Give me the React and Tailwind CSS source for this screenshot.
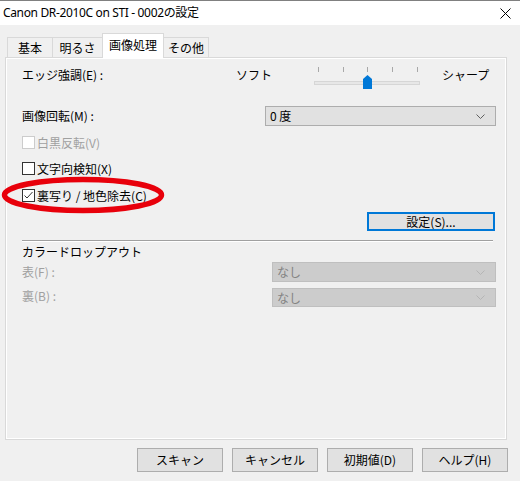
import React from "react";

function Chevron({ color = "#606060" }) {
  return (
    <svg width="9" height="5" viewBox="0 0 9 5" className="block">
      <polyline points="0.5,0.5 4.5,4.5 8.5,0.5" fill="none" stroke={color} strokeWidth="1" />
    </svg>
  );
}

function Checkbox({ checked = false, disabled = false }) {
  return (
    <div
      className={`w-[13px] h-[13px] border bg-white flex items-center justify-center ${
        disabled ? "border-[#cccccc]" : "border-[#333333]"
      }`}
    >
      {checked && (
        <svg width="11" height="11" viewBox="0 0 11 11" className="block">
          <polyline points="1.5,5.5 4,8 9.5,2" fill="none" stroke="#333" strokeWidth="1" />
        </svg>
      )}
    </div>
  );
}

function Select({ text, disabled = false, width }) {
  return (
    <div
      className={`h-full flex items-center justify-between pl-[4px] pr-[10px] border ${
        disabled ? "bg-[#cccccc] border-[#bfbfbf] text-[#838383]" : "bg-[#e1e1e1] border-[#adadad] text-black"
      }`}
      style={{ width }}
    >
      <span className="leading-none">{text}</span>
      <Chevron color={disabled ? "#b5b5b5" : "#606060"} />
    </div>
  );
}

function Slider() {
  const ticks = [6.5, 31.5, 55.5, 80.5, 105.5];
  return (
    <svg width="110" height="28" viewBox="0 0 110 28" className="block">
      {ticks.map((x) => (
        <line key={x} x1={x} y1="4" x2={x} y2="9" stroke="#a8a8a8" strokeWidth="1" />
      ))}
      <rect x="2.5" y="18.5" width="105" height="3" fill="#e7e7e7" stroke="#d6d6d6" strokeWidth="1" />
      <polygon points="51,16 55.5,12 60,16 60,26 51,26" fill="#0078d7" />
    </svg>
  );
}

function Button({ children, className = "" }) {
  return (
    <div
      className={`flex items-center justify-center bg-[#e1e1e1] border border-[#adadad] text-black ${className}`}
    >
      {children}
    </div>
  );
}

export default function App() {
  const tabs = [
    { label: "基本", w: 45 },
    { label: "明るさ", w: 50 },
    { label: "画像処理", w: 61, active: true },
    { label: "その他", w: 45 },
  ];
  return (
    <div className="relative w-[520px] h-[481px] overflow-hidden bg-[#f0f0f0] text-[12px] text-black font-['Noto_Sans_CJK_JP','Noto_Sans',sans-serif]">
      {/* Title bar */}
      <div className="h-[25px] bg-white border-t border-[#808080] flex items-center justify-between pl-[3px] pr-[9px]">
        <span className="text-[12px] tracking-[-0.35px] font-['Noto_Sans','Noto_Sans_CJK_JP',sans-serif] leading-none">
          Canon DR-2010C on STI - 0002の設定
        </span>
        <svg width="11" height="11" viewBox="0 0 11 11" className="block">
          <line x1="0.5" y1="0.5" x2="10.5" y2="10.5" stroke="#000" strokeWidth="1" />
          <line x1="10.5" y1="0.5" x2="0.5" y2="10.5" stroke="#000" strokeWidth="1" />
        </svg>
      </div>

      {/* Tabs */}
      <div className="ml-[7px] mt-[8px] h-[24px] flex items-end relative z-10">
        {tabs.map((t) =>
          t.active ? (
            <div
              key={t.label}
              className="h-[25px] -mb-px bg-white border border-b-0 border-[#d9d9d9] flex items-center justify-center -ml-px"
              style={{ width: t.w + 1 }}
            >
              <span className="leading-none -mt-[2px]">{t.label}</span>
            </div>
          ) : (
            <div
              key={t.label}
              className="h-[20px] bg-[#f0f0f0] border border-b-0 border-[#d9d9d9] flex items-center justify-center -ml-px first:ml-0"
              style={{ width: t.w + 1 }}
            >
              <span className="leading-none">{t.label}</span>
            </div>
          )
        )}
      </div>

      {/* Tab panel */}
      <div className="ml-[5px] w-[502px] h-[383px] border border-[#d9d9d9] shadow-[inset_1px_1px_0_#ffffff,inset_-1px_-1px_0_#ffffff] pl-[16px] pr-[10px] flex flex-col">
        {/* エッジ強調 */}
        <div className="mt-[5px] h-[28px] flex items-start">
          <div className="w-[214px] h-[24px] leading-[24px]">エッジ強調(E) :</div>
          <div className="w-[76px] h-[24px] leading-[24px]">ソフト</div>
          <Slider />
          <div className="ml-[20px] h-[24px] leading-[24px]">シャープ</div>
        </div>

        {/* 画像回転 */}
        <div className="mt-[15px] h-[20px] flex items-center justify-between">
          <span className="leading-none">画像回転(M) :</span>
          <Select text="0 度" width={231} />
        </div>

        {/* checkboxes */}
        <div className="mt-[10px] h-[13px] flex items-center gap-[2px] text-[#a0a0a0]">
          <Checkbox disabled />
          <span className="leading-none">白黒反転(V)</span>
        </div>
        <div className="mt-[13px] h-[13px] flex items-center gap-[2px]">
          <Checkbox />
          <span className="leading-none">文字向検知(X)</span>
        </div>
        <div className="mt-[14px] h-[13px] flex items-center gap-[2px]">
          <Checkbox checked />
          <span className="leading-none">裏写り / 地色除去(C)</span>
        </div>

        {/* 設定 button */}
        <div className="mt-[10px] h-[19px] flex justify-end pr-[1px]">
          <div className="w-[128px] h-full flex items-center justify-center bg-[#e1e1e1] border-2 border-[#0078d7]">
            <span className="leading-none">設定(S)...</span>
          </div>
        </div>

        {/* separator */}
        <div className="mt-[9px] mr-[3px] border-t border-[#a0a0a0] border-b border-b-white" />

        {/* カラードロップアウト */}
        <div className="mt-[2px] h-[16px] flex items-center">
          <span className="leading-none">カラードロップアウト</span>
        </div>
        <div className="mt-[2px] h-[20px] flex items-center justify-between text-[#a0a0a0]">
          <span className="leading-none">表(F) :</span>
          <Select text="なし" width={224} disabled />
        </div>
        <div className="mt-[6px] h-[19px] flex items-center justify-between text-[#a0a0a0]">
          <span className="leading-none -mt-[3px]">裏(B) :</span>
          <Select text="なし" width={224} disabled />
        </div>
      </div>

      {/* Bottom buttons */}
      <div className="mt-[8px] h-[24px] flex justify-end gap-[9px] pr-[12px]">
        <Button className="w-[86px]">スキャン</Button>
        <Button className="w-[86px]">キャンセル</Button>
        <Button className="w-[86px]">初期値(D)</Button>
        <Button className="w-[86px]">ヘルプ(H)</Button>
      </div>

      {/* Red annotation ellipse */}
      <svg
        width="170"
        height="40"
        viewBox="0 0 170 40"
        className="absolute left-0 top-[175px] pointer-events-none"
      >
        <ellipse cx="83" cy="20" rx="78.5" ry="15.5" fill="none" stroke="#e8000b" strokeWidth="5.5" />
      </svg>
    </div>
  );
}
